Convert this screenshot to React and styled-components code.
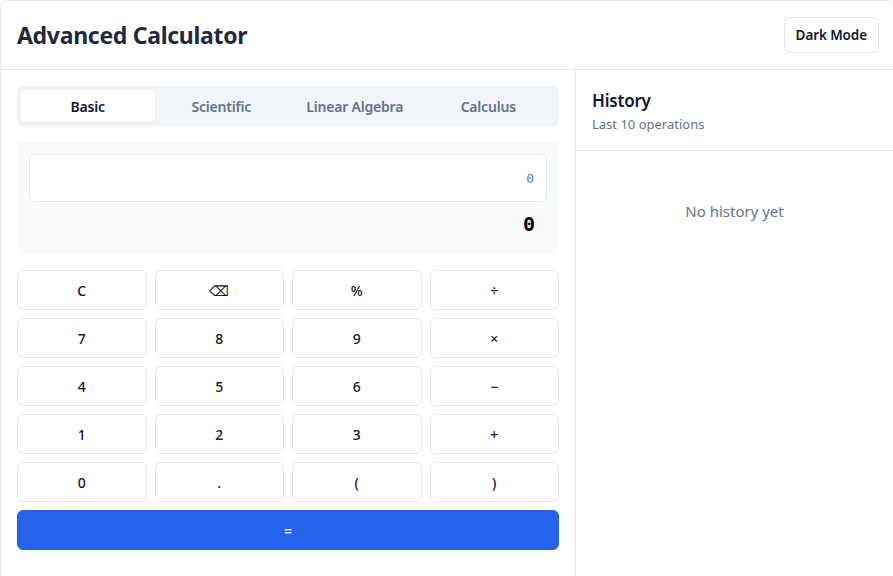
import React from "react";
import styled, { createGlobalStyle } from "styled-components";

const GlobalStyle = createGlobalStyle`
  * { box-sizing: border-box; }
  html, body { margin: 0; padding: 0; background: #ffffff; }
  body { font-family: "Segoe UI", "Noto Sans", "Open Sans", sans-serif; color: #0f172a; }
`;

const Card = styled.div`
  width: 894px;
  height: 590px;
  border: 1px solid #e5e7eb;
  border-radius: 8px;
  background: #fff;
  display: flex;
  flex-direction: column;
  overflow: hidden;
`;

const Header = styled.header`
  height: 69px;
  flex-shrink: 0;
  display: flex;
  align-items: center;
  justify-content: space-between;
  padding: 0 14px 0 16px;
  border-bottom: 1px solid #e5e7eb;
`;

const Title = styled.h1`
  margin: 0;
  font-size: 23px;
  font-weight: 700;
  color: #1e293b;
  letter-spacing: -0.3px;
`;

const OutlineButton = styled.button`
  height: 36px;
  padding: 0 11px;
  background: #fff;
  border: 1px solid #e2e8f0;
  border-radius: 6px;
  font-family: inherit;
  font-size: 13.5px;
  font-weight: 600;
  color: #0f172a;
  letter-spacing: -0.1px;
`;

const Body = styled.div`
  flex: 1;
  display: grid;
  grid-template-columns: 575px 1fr;
`;

const Main = styled.section`
  border-right: 1px solid #e5e7eb;
  padding: 16px 16px;
  display: flex;
  flex-direction: column;
`;

const Tabs = styled.div`
  display: grid;
  grid-template-columns: repeat(4, 1fr);
  height: 40px;
  padding: 4px;
  background: #f1f5f9;
  border-radius: 6px;
`;

const Tab = styled.button`
  border: none;
  border-radius: 4px;
  font-family: inherit;
  font-size: 14px;
  font-weight: 600;
  letter-spacing: -0.2px;
  background: ${(p) => (p.$active ? "#ffffff" : "transparent")};
  color: ${(p) => (p.$active ? "#0f172a" : "#64748b")};
  box-shadow: ${(p) => (p.$active ? "0 1px 2px rgba(0,0,0,0.05)" : "none")};
`;

const Display = styled.div`
  margin-top: 16px;
  background: #f8fafc;
  border-radius: 6px;
  padding: 12px;
  height: 112px;
  display: flex;
  flex-direction: column;
`;

const ExprInput = styled.input`
  height: 48px;
  width: 100%;
  border: 1px solid #e2e8f0;
  border-radius: 6px;
  background: #fff;
  padding: 0 12px;
  text-align: right;
  font-family: "DejaVu Sans Mono", "Liberation Mono", monospace;
  font-size: 13px;
  outline: none;
  &::placeholder { color: #64748b; }
`;

const Result = styled.div`
  margin-top: 10px;
  text-align: right;
  padding-right: 12px;
  font-family: "DejaVu Sans Mono", "Liberation Mono", monospace;
  font-size: 20px;
  font-weight: 700;
  color: #000;
`;

const Keypad = styled.div`
  margin-top: 16px;
  display: grid;
  grid-template-columns: repeat(4, 1fr);
  grid-auto-rows: 40px;
  gap: 8px;
`;

const Key = styled.button`
  border: 1px solid #e2e8f0;
  border-radius: 6px;
  background: ${(p) => (p.$primary ? "#2563eb" : "#ffffff")};
  border-color: ${(p) => (p.$primary ? "#2563eb" : "#e2e8f0")};
  color: ${(p) => (p.$primary ? "#ffffff" : "#0f172a")};
  grid-column: ${(p) => (p.$wide ? "1 / -1" : "auto")};
  font-family: inherit;
  font-size: 14px;
  font-weight: 500;
`;

const Side = styled.aside`
  display: flex;
  flex-direction: column;
`;

const SideHead = styled.div`
  height: 81px;
  padding: 20px 16px 0;
  border-bottom: 1px solid #e5e7eb;
`;

const SideTitle = styled.h2`
  margin: 0;
  font-size: 17px;
  font-weight: 600;
  line-height: 22px;
  color: #0f172a;
  letter-spacing: -0.2px;
`;

const SideSub = styled.p`
  margin: 3px 0 0;
  font-size: 13px;
  color: #64748b;
`;

const Empty = styled.div`
  padding-top: 50px;
  text-align: center;
  font-size: 15px;
  color: #64748b;
`;

const tabs = ["Basic", "Scientific", "Linear Algebra", "Calculus"];
const keys = ["C", "⌫", "%", "÷", "7", "8", "9", "×", "4", "5", "6", "−", "1", "2", "3", "+", "0", ".", "(", ")"];

export default function App() {
  return (
    <>
      <GlobalStyle />
      <Card>
        <Header>
          <Title>Advanced Calculator</Title>
          <OutlineButton>Dark Mode</OutlineButton>
        </Header>
        <Body>
          <Main>
            <Tabs>
              {tabs.map((t, i) => (
                <Tab key={t} $active={i === 0}>{t}</Tab>
              ))}
            </Tabs>
            <Display>
              <ExprInput placeholder="0" />
              <Result>0</Result>
            </Display>
            <Keypad>
              {keys.map((k) => (
                <Key key={k}>{k}</Key>
              ))}
              <Key $primary $wide>=</Key>
            </Keypad>
          </Main>
          <Side>
            <SideHead>
              <SideTitle>History</SideTitle>
              <SideSub>Last 10 operations</SideSub>
            </SideHead>
            <Empty>No history yet</Empty>
          </Side>
        </Body>
      </Card>
    </>
  );
}
